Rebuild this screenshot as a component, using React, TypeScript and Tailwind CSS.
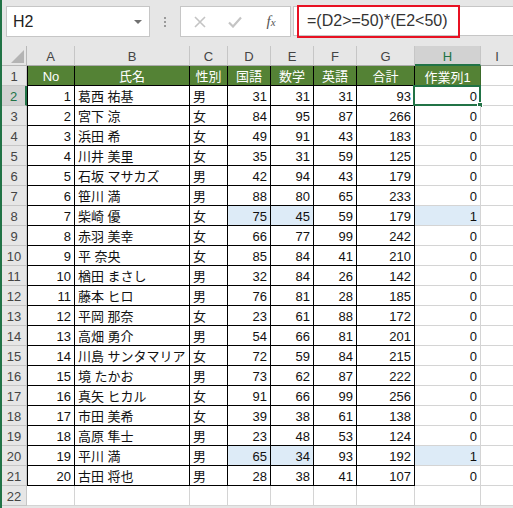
import React from 'react';

type Rec = [number, string, string, number, number, number, number, number];

const rows: Rec[] = [
    [1, '葛西 祐基', '男', 31, 31, 31, 93, 0],
    [2, '宮下 涼', '女', 84, 95, 87, 266, 0],
    [3, '浜田 希', '女', 49, 91, 43, 183, 0],
    [4, '川井 美里', '女', 35, 31, 59, 125, 0],
    [5, '石坂 マサカズ', '男', 42, 94, 43, 179, 0],
    [6, '笹川 満', '男', 88, 80, 65, 233, 0],
    [7, '柴崎 優', '女', 75, 45, 59, 179, 1],
    [8, '赤羽 美幸', '女', 66, 77, 99, 242, 0],
    [9, '平 奈央', '女', 85, 84, 41, 210, 0],
    [10, '楢田 まさし', '男', 32, 84, 26, 142, 0],
    [11, '藤本 ヒロ', '男', 76, 81, 28, 185, 0],
    [12, '平岡 那奈', '女', 23, 61, 88, 172, 0],
    [13, '高畑 勇介', '男', 54, 66, 81, 201, 0],
    [14, '川島 サンタマリア', '女', 72, 59, 84, 215, 0],
    [15, '境 たかお', '男', 73, 62, 87, 222, 0],
    [16, '真矢 ヒカル', '女', 91, 66, 99, 256, 0],
    [17, '市田 美希', '女', 39, 38, 61, 138, 0],
    [18, '高原 隼士', '男', 23, 48, 53, 124, 0],
    [19, '平川 満', '男', 65, 34, 93, 192, 1],
    [20, '古田 将也', '男', 28, 38, 41, 107, 0],
];

const colHeads = [
    { l: 'A', w: 'w-[48px]' },
    { l: 'B', w: 'w-[115px]' },
    { l: 'C', w: 'w-[38px]' },
    { l: 'D', w: 'w-[43px]' },
    { l: 'E', w: 'w-[43px]' },
    { l: 'F', w: 'w-[43px]' },
    { l: 'G', w: 'w-[58px]' },
];

const RowHead = ({ n, sel }: { n: number; sel?: boolean }) =>
    sel ? (
        <div className="w-[25px] shrink-0 h-full flex items-center justify-center pt-[2px] bg-[#d2d2d2] text-[#217346] border-b border-[#c6c6c6] border-r-2 border-r-[#217346]">{n}</div>
    ) : (
        <div className="w-[25px] shrink-0 h-full flex items-center justify-center pt-[2px] bg-[#e6e6e6] text-[#444] border-b border-r border-[#c6c6c6]">{n}</div>
    );

export default function App() {
    const blk = 'h-full shrink-0 flex items-center pt-[2px] border-r border-b border-black';
    return (
        <div className="w-[513px] h-[508px] overflow-hidden bg-[#e6e6e6] border-l-2 border-[#217346] font-['Liberation_Sans','Noto_Sans_CJK_JP',sans-serif] text-[13px] leading-none text-[#111]">
            {/* formula bar */}
            <div className="relative flex h-[46px] pt-[6px]">
                <div className="ml-[4px] w-[144px] h-[31px] bg-white border border-[#c6c6c6] flex items-center pl-[6px] pr-[7px] text-[16px] text-[#222]">
                    <span className="flex-1">H2</span>
                    <span className="w-0 h-0 border-l-[4px] border-r-[4px] border-t-[4px] border-l-transparent border-r-transparent border-t-[#707070]"></span>
                </div>
                <div className="w-[30px] h-[31px] flex flex-col items-center justify-center gap-[2px]">
                    <span className="w-[2px] h-[2px] bg-[#9a9a9a]"></span>
                    <span className="w-[2px] h-[2px] bg-[#9a9a9a]"></span>
                    <span className="w-[2px] h-[2px] bg-[#9a9a9a]"></span>
                </div>
                <div className="w-[111px] h-[31px] bg-white border border-[#c6c6c6] flex items-center">
                    <div className="w-[36px] flex justify-center pl-[2px]">
                        <svg width="12" height="12" viewBox="0 0 12 12"><path d="M1 1L11 11M11 1L1 11" stroke="#c4c4c4" strokeWidth="1.6" /></svg>
                    </div>
                    <div className="w-[36px] flex justify-center">
                        <svg width="14" height="12" viewBox="0 0 14 12"><path d="M1 6.5L5 10.5L13 1.5" fill="none" stroke="#c4c4c4" strokeWidth="2.2" /></svg>
                    </div>
                    <div className="w-[36px] flex justify-center font-['Liberation_Serif',serif] italic text-[#555] text-[15px]">
                        <span>f</span><span className="text-[11px] mt-[3px]">x</span>
                    </div>
                </div>
                <div className="ml-[2px] flex-1 h-[30px] bg-white border-y border-l border-[#c6c6c6] flex items-center pl-[13px] text-[16px] text-[#333]">
                    =(D2&gt;=50)*(E2&lt;50)
                </div>
                <div className="absolute left-[295px] top-[5px] w-[163px] h-[33px] border-2 border-[#e81123]"></div>
            </div>

            {/* column header */}
            <div className="flex h-[20px] text-[#444]">
                <div className="w-[25px] shrink-0 h-full border-r border-b border-[#b8b8b8] flex items-end justify-end pr-[2px] pb-[2px]">
                    <svg width="13" height="13" viewBox="0 0 13 13"><path d="M13 0V13H0Z" fill="#b4b4b4" /></svg>
                </div>
                {colHeads.map((c) => (
                    <div key={c.l} className={`${c.w} shrink-0 h-full flex items-center justify-center pt-[2px] border-r border-b border-[#c6c6c6] border-b-[#ababab]`}>{c.l}</div>
                ))}
                <div className="w-[66px] shrink-0 h-full flex items-center justify-center pt-[2px] bg-[#d2d2d2] text-[#217346] border-r border-[#c6c6c6] border-b-2 border-b-[#217346]">H</div>
                <div className="flex-1 h-full flex items-center justify-center pt-[2px] border-b border-[#ababab]">I</div>
            </div>

            {/* row 1 */}
            <div className="flex h-[20px]">
                <RowHead n={1} />
                <div className={`${blk} w-[48px] border-l justify-center bg-[#548235] text-white`}>No</div>
                <div className={`${blk} w-[115px] justify-center bg-[#548235] text-white`}>氏名</div>
                <div className={`${blk} w-[38px] justify-center bg-[#548235] text-white`}>性別</div>
                <div className={`${blk} w-[43px] justify-center bg-[#548235] text-white`}>国語</div>
                <div className={`${blk} w-[43px] justify-center bg-[#548235] text-white`}>数学</div>
                <div className={`${blk} w-[43px] justify-center bg-[#548235] text-white`}>英語</div>
                <div className={`${blk} w-[58px] justify-center bg-[#548235] text-white`}>合計</div>
                <div className="w-[66px] shrink-0 h-full flex items-center justify-center pt-[2px] bg-[#548235] text-white border-r border-[#3d6b2a]">作業列1</div>
                <div className="flex-1 h-full bg-white border-b border-[#d4d4d4]"></div>
            </div>

            {rows.map((r, i) => {
                const hl = r[7] === 1;
                const sel = i === 0;
                return (
                    <div key={r[0]} className="flex h-[20px]">
                        <RowHead n={i + 2} sel={sel} />
                        <div className={`${blk} w-[48px] border-l justify-end pr-[3px] bg-white`}>{r[0]}</div>
                        <div className={`${blk} w-[115px] pl-[3px] bg-white`}>{r[1]}</div>
                        <div className={`${blk} w-[38px] pl-[3px] bg-white`}>{r[2]}</div>
                        <div className={`${blk} w-[43px] justify-end pr-[3px] ${hl ? 'bg-[#ddebf7]' : 'bg-white'}`}>{r[3]}</div>
                        <div className={`${blk} w-[43px] justify-end pr-[3px] ${hl ? 'bg-[#ddebf7]' : 'bg-white'}`}>{r[4]}</div>
                        <div className={`${blk} w-[43px] justify-end pr-[3px] bg-white`}>{r[5]}</div>
                        <div className={`${blk} w-[58px] justify-end pr-[3px] bg-white`}>{r[6]}</div>
                        <div className={`relative w-[66px] shrink-0 h-full flex items-center justify-end pt-[2px] pr-[3px] border-r border-b border-[#d4d4d4] ${hl ? 'bg-[#ddebf7]' : 'bg-white'}`}>
                            {r[7]}
                            {sel && (
                                <>
                                    <div className="absolute -left-[2px] -top-[1px] -right-[1px] -bottom-[1px] border-2 border-[#217346]"></div>
                                    <div className="absolute -right-[3px] -bottom-[3px] w-[6px] h-[6px] bg-[#217346] border border-white"></div>
                                </>
                            )}
                        </div>
                        <div className="flex-1 h-full bg-white border-b border-[#d4d4d4]"></div>
                    </div>
                );
            })}

            {/* row 22 */}
            <div className="flex h-[20px]">
                <RowHead n={22} />
                <div className="w-[48px] shrink-0 h-full bg-white border-r border-b border-[#d4d4d4]"></div>
                <div className="w-[115px] shrink-0 h-full bg-white border-r border-b border-[#d4d4d4]"></div>
                <div className="w-[38px] shrink-0 h-full bg-white border-r border-b border-[#d4d4d4]"></div>
                <div className="w-[43px] shrink-0 h-full bg-white border-r border-b border-[#d4d4d4]"></div>
                <div className="w-[43px] shrink-0 h-full bg-white border-r border-b border-[#d4d4d4]"></div>
                <div className="w-[43px] shrink-0 h-full bg-white border-r border-b border-[#d4d4d4]"></div>
                <div className="w-[58px] shrink-0 h-full bg-white border-r border-b border-[#d4d4d4]"></div>
                <div className="w-[66px] shrink-0 h-full bg-white border-r border-b border-[#d4d4d4]"></div>
                <div className="flex-1 h-full bg-white border-b border-[#d4d4d4]"></div>
            </div>
        </div>
    );
}
